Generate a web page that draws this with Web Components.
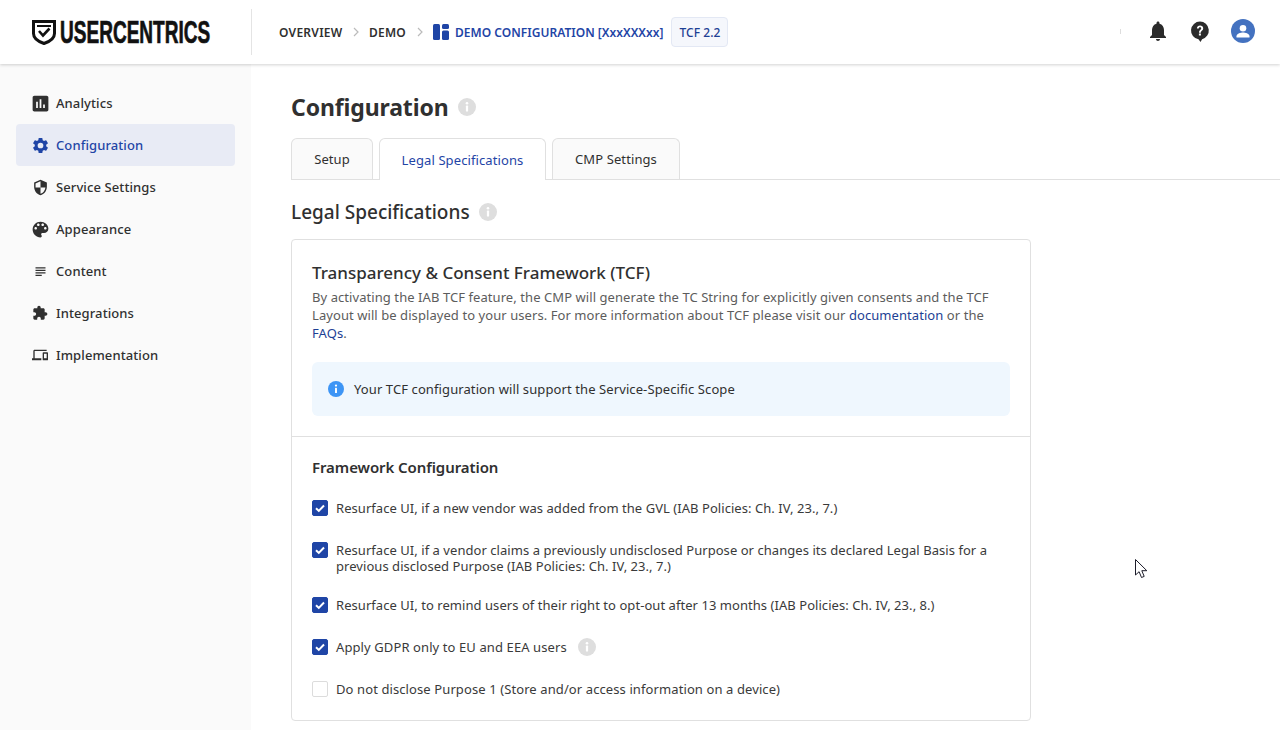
<!DOCTYPE html>
<html lang="en">
<head>
<meta charset="utf-8">
<title>Configuration</title>
<style>
html,body{margin:0;padding:0;height:730px;overflow:hidden;background:#fff;}
body{font-family:"Noto Sans","Open Sans",sans-serif;color:#303030;display:flex;flex-direction:column;letter-spacing:.1px;}
</style>
</head>
<body>

<uc-header></uc-header>
<uc-layout>
  <uc-sidenav slot="side"></uc-sidenav>
  <uc-legal-page></uc-legal-page>
</uc-layout>
<uc-cursor></uc-cursor>

<script>
const ICONS = {
  analytics:[21,'<path d="M19 3H5c-1.1 0-2 .9-2 2v14c0 1.1.9 2 2 2h14c1.1 0 2-.9 2-2V5c0-1.1-.9-2-2-2zM9 17H7v-7h2v7zm4 0h-2V7h2v10zm4 0h-2v-4h2v4z"/>'],
  settings:[19,'<path d="M19.14 12.94c.04-.3.06-.61.06-.94s-.02-.64-.07-.94l2.03-1.58a.49.49 0 0 0 .12-.61l-1.92-3.32a.49.49 0 0 0-.59-.22l-2.39.96c-.5-.38-1.03-.7-1.62-.94l-.36-2.54a.48.48 0 0 0-.48-.41h-3.84a.48.48 0 0 0-.47.41l-.36 2.54c-.59.24-1.13.57-1.62.94l-2.39-.96a.48.48 0 0 0-.59.22L2.73 8.87a.48.48 0 0 0 .12.61l2.03 1.58c-.05.3-.09.63-.09.94s.02.64.07.94l-2.03 1.58a.49.49 0 0 0-.12.61l1.92 3.32c.12.22.37.29.59.22l2.39-.96c.5.38 1.03.7 1.62.94l.36 2.54c.05.24.24.41.48.41h3.84c.24 0 .44-.17.47-.41l.36-2.54c.59-.24 1.13-.56 1.62-.94l2.39.96c.22.08.47 0 .59-.22l1.92-3.32a.48.48 0 0 0-.12-.61l-2.01-1.58zM12 15.6A3.6 3.6 0 1 1 12 8.4a3.6 3.6 0 0 1 0 7.2z"/>'],
  shield:[17,'<path d="M12 1L3 5v6c0 5.55 3.84 10.74 9 12 5.16-1.26 9-6.45 9-12V5l-9-4zm0 10.99h7c-.53 4.12-3.28 7.79-7 8.94V12H5V6.3l7-3.11v8.8z"/>'],
  palette:[21,'<path d="M12 3c-4.97 0-9 4.03-9 9s4.03 9 9 9c.83 0 1.5-.67 1.5-1.5 0-.39-.15-.74-.39-1.01-.23-.26-.38-.61-.38-.99 0-.83.67-1.5 1.5-1.5H16c2.76 0 5-2.24 5-5 0-4.42-4.03-8-9-8zm-5.5 9c-.83 0-1.5-.67-1.5-1.5S5.67 9 6.5 9 8 9.67 8 10.5 7.33 12 6.5 12zm3-4C8.67 8 8 7.33 8 6.5S8.67 5 9.5 5s1.5.67 1.5 1.5S10.33 8 9.5 8zm5 0c-.83 0-1.5-.67-1.5-1.5S13.67 5 14.5 5s1.5.67 1.5 1.5S15.33 8 14.5 8zm3 4c-.83 0-1.5-.67-1.5-1.5S16.67 9 17.5 9s1.5.67 1.5 1.5-.67 1.5-1.5 1.5z"/>'],
  subject:[15,'<path d="M14 17H4v2h10v-2zm6-8H4v2h16V9zM4 15h16v-2H4v2zM4 5v2h16V5H4z"/>'],
  extension:[16,'<path d="M20.5 11H19V7c0-1.1-.9-2-2-2h-4V3.5C13 2.12 11.88 1 10.5 1S8 2.12 8 3.5V5H4c-1.1 0-1.99.9-1.99 2v3.8H3.5c1.49 0 2.7 1.21 2.7 2.7s-1.21 2.7-2.7 2.7H2V20c0 1.1.9 2 2 2h3.8v-1.5c0-1.49 1.21-2.7 2.7-2.7 1.49 0 2.7 1.21 2.7 2.7V22H17c1.1 0 2-.9 2-2v-4h1.5c1.38 0 2.5-1.12 2.5-2.5S21.88 11 20.5 11z"/>'],
  devices:[16,'<path d="M4 6h18V4H4c-1.1 0-2 .9-2 2v11H0v3h14v-3H4V6zm19 2h-6c-.55 0-1 .45-1 1v10c0 .55.45 1 1 1h6c.55 0 1-.45 1-1V9c0-.55-.45-1-1-1zm-1 9h-4v-7h4v7z"/>']
};

class UcInfoDot extends HTMLElement{
  constructor(){
    super();
    const size = this.getAttribute("size") || 18;
    const bg = this.getAttribute("bg") || "#dedede";
    this.attachShadow({mode:'open'}).innerHTML = `
      <style>:host{display:inline-flex;flex:none;} svg{display:block;}</style>
      <svg width="${size}" height="${size}" viewBox="0 0 18 18">
        <circle cx="9" cy="9" r="9" fill="${bg}"/>
        <circle cx="9" cy="5.2" r="1.3" fill="#fff"/>
        <rect x="7.9" y="7.6" width="2.2" height="6" rx=".6" fill="#fff"/>
      </svg>`;
  }
}
customElements.define("uc-info-dot", UcInfoDot);

class UcHeader extends HTMLElement{
  constructor(){
    super();
    this.attachShadow({mode:'open'}).innerHTML = `
      <style>
      :host{display:flex;align-items:center;height:64px;flex:none;background:#fff;box-shadow:0 1px 3px rgba(0,0,0,.18);position:relative;z-index:2;}
      .logo{width:252px;box-sizing:border-box;padding-left:32px;display:flex;align-items:center;gap:4px;height:46px;border-right:1px solid #e4e4e4;flex:none;}
      .logo svg{display:block;flex:none;}
      .wordbox{display:block;width:150px;height:30px;flex:none;}
      .word{display:inline-block;font-family:"Liberation Sans",sans-serif;font-weight:700;font-size:32px;line-height:30px;color:#111;letter-spacing:0;-webkit-text-stroke:.7px #111;white-space:nowrap;transform-origin:0 50%;transform:scaleX(.595);}
      .crumbs{display:flex;align-items:center;padding-left:27px;font-size:12px;font-weight:600;color:#303030;white-space:nowrap;letter-spacing:.25px;}
      .sep{width:26px;display:flex;justify-content:center;}
      .current{display:flex;align-items:center;gap:6px;color:#1f45a6;letter-spacing:.02px;}
      .badge{margin-left:8px;height:30px;width:57px;box-sizing:border-box;display:flex;align-items:center;justify-content:center;border:1px solid #e3e8f4;border-radius:4px;background:#f5f7fc;color:#1d3f94;font-weight:500;letter-spacing:.05px;}
      .tools{margin-left:auto;display:flex;align-items:center;padding-right:25px;margin-top:-2px;}
      .tick{width:1px;height:5px;background:#ddd;margin-right:25px;}
      .tools svg{display:block;}
      .bell{margin-right:18px;}
      .help{margin-right:19px;}
      </style>
      <div class="logo">
        <svg width="24" height="25" viewBox="0 0 24 25">
          <path d="M1.500 1.500h21v12c0 5-4.500 8-10.500 10C6 21.500 1.500 18.500 1.500 13.500z" fill="none" stroke="#111" stroke-width="3"/>
          <path d="M5 5h14v2H5z" fill="#111"/>
          <path d="M7 11l4 4.500 6.500-7" fill="none" stroke="#111" stroke-width="2.600"/>
        </svg>
        <span class="wordbox"><span class="word">USERCENTRICS</span></span>
      </div>
      <div class="crumbs">
        <span>OVERVIEW</span>
        <span class="sep" style="width:26.500px"><svg width="6" height="10" viewBox="0 0 6 10"><path d="M1 1l4 4-4 4" fill="none" stroke="#bbb" stroke-width="1.200"/></svg></span>
        <span>DEMO</span>
        <span class="sep" style="width:27px"><svg width="6" height="10" viewBox="0 0 6 10"><path d="M1 1l4 4-4 4" fill="none" stroke="#bbb" stroke-width="1.200"/></svg></span>
        <span class="current">
          <svg width="16" height="16" viewBox="0 0 16 16" fill="#1f45a6"><rect width="7" height="16" rx="1.500"/><rect x="9" width="7" height="5" rx="1.500"/><rect x="9" y="6.500" width="7" height="9.500" rx="1.500"/></svg>
          <span>DEMO CONFIGURATION [XxxXXXxx]</span>
        </span>
        <span class="badge">TCF 2.2</span>
      </div>
      <div class="tools">
        <span class="tick"></span>
        <svg class="bell" width="24" height="24" viewBox="0 0 24 24" fill="#2b2b2b"><path d="M12 22c1.100 0 2-.9 2-2h-4c0 1.100.89 2 2 2zm6-6v-5c0-3.070-1.640-5.640-4.500-6.320V4c0-.83-.67-1.500-1.500-1.500s-1.500.67-1.500 1.500v.68C7.630 5.360 6 7.920 6 11v5l-2 2v1h16v-1l-2-2z"/></svg>
        <svg class="help" width="24" height="24" viewBox="0 0 24 24"><path d="M12 2.500a9 9 0 0 0-1.500 17.870L12.500 23l1.600-2.800A9 9 0 0 0 12 2.500z" fill="#2b2b2b"/><path d="M8.900 9.500c0-1.900 1.400-3 3.200-3 1.700 0 3.100 1 3.100 2.800 0 2.400-2.300 2.300-2.300 4.400h-1.900c0-3 2.200-2.900 2.200-4.300 0-.7-.5-1.200-1.200-1.200-.8 0-1.200.5-1.200 1.300zM10.900 14.600h2v2h-2z" fill="#fff"/></svg>
        <svg width="24" height="24" viewBox="0 0 24 24"><circle cx="12" cy="12" r="12" fill="#4472c0"/><circle cx="12" cy="9.200" r="3.300" fill="#fff"/><path d="M5.500 17.200c0-2.600 4.300-3.700 6.500-3.700s6.500 1.100 6.500 3.700V18.500h-13z" fill="#fff"/></svg>
      </div>`;
  }
}
customElements.define("uc-header", UcHeader);

class UcLayout extends HTMLElement{
  constructor(){
    super();
    this.attachShadow({mode:'open'}).innerHTML = `
      <style>
      :host{display:flex;flex:1;min-height:0;}
      ::slotted([slot=side]){flex:none;}
      .main{flex:1;min-width:0;}
      </style>
      <slot name="side"></slot>
      <div class="main"><slot></slot></div>`;
  }
}
customElements.define("uc-layout", UcLayout);

class UcNavItem extends HTMLElement{
  constructor(){
    super();
    const [size, icon] = ICONS[this.getAttribute("icon")];
    this.attachShadow({mode:'open'}).innerHTML = `
      <style>
      :host{display:flex;align-items:center;height:42px;border-radius:4px;padding-left:15px;gap:7px;font-size:13px;font-weight:500;color:#303030;}
      :host([active]){background:#e8ebf5;color:#1f45a6;}
      .ic{width:18px;display:flex;justify-content:center;flex:none;}
      svg{display:block;fill:currentColor;flex:none;}
      </style>
      <span class="ic"><svg width="${size}" height="${size}" viewBox="0 0 24 24">${icon}</svg></span>
      <span><slot></slot></span>`;
  }
}
customElements.define("uc-nav-item", UcNavItem);

class UcSidenav extends HTMLElement{
  constructor(){
    super();
    this.attachShadow({mode:'open'}).innerHTML = `
      <style>
      :host{display:flex;flex-direction:column;width:251px;box-sizing:border-box;background:#fafafa;padding:18px 16px 0;}
      </style>
      <uc-nav-item icon="analytics">Analytics</uc-nav-item>
      <uc-nav-item icon="settings" active>Configuration</uc-nav-item>
      <uc-nav-item icon="shield">Service Settings</uc-nav-item>
      <uc-nav-item icon="palette">Appearance</uc-nav-item>
      <uc-nav-item icon="subject">Content</uc-nav-item>
      <uc-nav-item icon="extension">Integrations</uc-nav-item>
      <uc-nav-item icon="devices">Implementation</uc-nav-item>`;
  }
}
customElements.define("uc-sidenav", UcSidenav);

class UcTabs extends HTMLElement{
  constructor(){
    super();
    this.attachShadow({mode:'open'}).innerHTML = `
      <style>
      :host{display:flex;gap:6px;height:42px;box-sizing:border-box;border-bottom:1px solid #e0e0e0;font-size:13px;}
      .tab{height:41px;box-sizing:border-box;border:1px solid #e0e0e0;border-bottom:0;border-radius:6px 6px 0 0;background:#fafafa;display:flex;align-items:center;justify-content:center;color:#303030;}
      .on{height:42px;background:#fff;color:#1f45a6;padding-top:1px;}
      </style>
      <div class="tab" style="width:82px">Setup</div>
      <div class="tab on" style="width:167px">Legal Specifications</div>
      <div class="tab" style="width:128px">CMP Settings</div>`;
  }
}
customElements.define("uc-tabs", UcTabs);

class UcCheckRow extends HTMLElement{
  constructor(){
    super();
    const on = this.hasAttribute("checked");
    this.attachShadow({mode:'open'}).innerHTML = `
      <style>
      :host{display:flex;align-items:flex-start;gap:8px;font-size:13px;line-height:16px;color:#3a3a3a;letter-spacing:.05px;}
      .box{flex:none;width:16px;height:16px;box-sizing:border-box;border-radius:2px;border:1px solid #dcdcdc;background:#fff;}
      :host([checked]) .box{background:#1f45a6;border-color:#1f45a6;}
      svg{display:block;}
      .txt{display:flex;align-items:center;gap:11px;height:auto;}
      </style>
      <div class="box">${on ? '<svg width="14" height="14" viewBox="0 0 14 14"><path d="M3 7.200l2.800 2.700L11 4.500" fill="none" stroke="#fff" stroke-width="2"/></svg>' : ''}</div>
      <div class="txt"><span><slot></slot></span><slot name="after"></slot></div>`;
  }
}
customElements.define("uc-check-row", UcCheckRow);

class UcNotice extends HTMLElement{
  constructor(){
    super();
    this.attachShadow({mode:'open'}).innerHTML = `
      <style>
      :host{display:flex;align-items:center;gap:10px;height:54px;box-sizing:border-box;padding-left:16px;border-radius:6px;background:#eff7fe;font-size:13px;color:#303030;}
      </style>
      <uc-info-dot size="16" bg="#3d95f5"></uc-info-dot>
      <span><slot></slot></span>`;
  }
}
customElements.define("uc-notice", UcNotice);

class UcCard extends HTMLElement{
  constructor(){
    super();
    this.attachShadow({mode:'open'}).innerHTML = `
      <style>
      :host{display:block;width:740px;box-sizing:border-box;height:482px;border:1px solid #e0e0e0;border-radius:4px;background:#fff;}
      .top{padding:20px 20px 20px;border-bottom:1px solid #e0e0e0;}
      h3{margin:0;font-size:17px;line-height:26px;font-weight:500;color:#303030;letter-spacing:0;}
      p{margin:2px 0 20px;font-size:13px;line-height:18px;color:#5c5c5c;letter-spacing:.07px;}
      a{color:#1d3f94;text-decoration:none;}
      .bottom{padding:20px 20px 0;}
      h4{margin:0 0 23px;font-size:15px;line-height:20px;font-weight:600;color:#303030;letter-spacing:-.08px;}
      .rows{display:flex;flex-direction:column;gap:26px;}
      .multi{margin-bottom:-3px;}
      .wide{letter-spacing:.1px;}
      </style>
      <div class="top">
        <h3>Transparency &amp; Consent Framework (TCF)</h3>
        <p>By activating the IAB TCF feature, the CMP will generate the TC String for explicitly given consents and the TCF Layout will be displayed to your users. For more information about TCF please visit our <a>documentation</a> or the <a>FAQs</a>.</p>
        <uc-notice>Your TCF configuration will support the Service-Specific Scope</uc-notice>
      </div>
      <div class="bottom">
        <h4>Framework Configuration</h4>
        <div class="rows">
          <uc-check-row checked>Resurface UI, if a new vendor was added from the GVL (IAB Policies: Ch. IV, 23., 7.)</uc-check-row>
          <uc-check-row class="multi" checked>Resurface UI, if a vendor claims a previously undisclosed Purpose or changes its declared Legal Basis for a previous disclosed Purpose (IAB Policies: Ch. IV, 23., 7.)</uc-check-row>
          <uc-check-row checked>Resurface UI, to remind users of their right to opt-out after 13 months (IAB Policies: Ch. IV, 23., 8.)</uc-check-row>
          <uc-check-row class="wide" checked>Apply GDPR only to EU and EEA users<uc-info-dot slot="after" style="margin:-1px 0"></uc-info-dot></uc-check-row>
          <uc-check-row class="wide">Do not disclose Purpose 1 (Store and/or access information on a device)</uc-check-row>
        </div>
      </div>`;
  }
}
customElements.define("uc-card", UcCard);

class UcLegalPage extends HTMLElement{
  constructor(){
    super();
    this.attachShadow({mode:'open'}).innerHTML = `
      <style>
      :host{display:block;padding:28px 0 0 40px;}
      .head{display:flex;align-items:center;gap:9px;margin:0;}
      h1{margin:0;font-size:23px;line-height:30px;font-weight:700;color:#303030;letter-spacing:-.12px;}
      h2{margin:0;font-size:19px;line-height:26px;font-weight:500;color:#303030;letter-spacing:0;}
      uc-tabs{margin-top:16px;}
      .sec{margin:19px 0 14px;gap:9px;}
      </style>
      <div class="head"><h1>Configuration</h1><uc-info-dot></uc-info-dot></div>
      <uc-tabs></uc-tabs>
      <div class="head sec"><h2>Legal Specifications</h2><uc-info-dot></uc-info-dot></div>
      <uc-card></uc-card>`;
  }
}
customElements.define("uc-legal-page", UcLegalPage);

// mouse pointer that was caught in the screenshot
class UcCursor extends HTMLElement{
  constructor(){
    super();
    this.attachShadow({mode:'open'}).innerHTML = `
      <style>:host{position:fixed;left:1135px;top:559px;display:block;line-height:0;z-index:5;}</style>
      <svg width="13" height="20" viewBox="0 0 13 20"><path d="M.5.5v15.500l3.600-3.300 2.400 5.800 2.700-1.100-2.400-5.700h5z" fill="#fff" stroke="#1c1c2a" stroke-width="1"/></svg>`;
  }
}
customElements.define("uc-cursor", UcCursor);
</script>
</body>
</html>
